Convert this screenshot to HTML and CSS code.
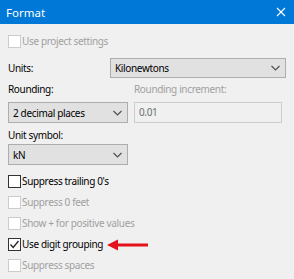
FILE: index.html
```html
<!doctype html>
<html lang="en-US">
    <head>
        <meta charset="utf-8">
        <meta name="viewport" content="width=device-width, initial-scale=1">
        <title>Format</title>
        <link rel="stylesheet" href="styles.css">
    </head>
    <body>
        <div class="dialog">
            <div class="titlebar">
                <span class="title">Format</span>
                <svg class="close" width="10" height="10" viewBox="0 0 10 10">
                    <path d="M1 1 L9 9 M9 1 L1 9" stroke="#fff" stroke-width="1.1" fill="none" />
                </svg>
            </div>
            <div class="content">
                <div class="check disabled first"><span class="box"></span>Use project settings</div>

                <div class="units">
                    <span class="label">Units:</span>
                    <div class="select wide">
                        <span>Kilonewtons</span>
                        <svg width="9" height="6" viewBox="0 0 9 6"><path d="M0.5 1 L4.5 5 L8.5 1" stroke="#505050" stroke-width="1.2" fill="none" /></svg>
                    </div>
                </div>

                <div class="pair">
                    <div class="field">
                        <span class="label">Rounding:</span>
                        <div class="select">
                            <span>2 decimal places</span>
                            <svg width="9" height="6" viewBox="0 0 9 6"><path d="M0.5 1 L4.5 5 L8.5 1" stroke="#505050" stroke-width="1.2" fill="none" /></svg>
                        </div>
                    </div>
                    <div class="field grow">
                        <span class="label disabled">Rounding increment:</span>
                        <div class="textbox">0.01</div>
                    </div>
                </div>

                <div class="field symbol">
                    <span class="label">Unit symbol:</span>
                    <div class="select">
                        <span>kN</span>
                        <svg width="9" height="6" viewBox="0 0 9 6"><path d="M0.5 1 L4.5 5 L8.5 1" stroke="#505050" stroke-width="1.2" fill="none" /></svg>
                    </div>
                </div>

                <div class="checks">
                    <div class="check"><span class="box"></span>Suppress trailing 0's</div>
                    <div class="check disabled"><span class="box"></span>Suppress 0 feet</div>
                    <div class="check disabled"><span class="box"></span>Show + for positive values</div>
                    <div class="check">
                        <span class="box checked">
                            <svg width="11" height="11" viewBox="0 0 11 11"><path d="M1.5 5.5 L4.2 8.5 L9.5 2" stroke="#222" stroke-width="1.3" fill="none" /></svg>
                        </span>Use digit grouping
                        <svg class="arrow" width="41" height="12" viewBox="0 0 41 12">
                            <path d="M0 6 L11 0.5 L11 11.5 Z" fill="#e3131b" />
                            <path d="M10 6 L41 6" stroke="#e3131b" stroke-width="3" />
                        </svg>
                    </div>
                    <div class="check disabled"><span class="box"></span>Suppress spaces</div>
                </div>
            </div>
        </div>
    </body>
</html>
```

FILE: styles.css
```css
* {
    margin: 0;
    padding: 0;
    box-sizing: border-box;
}

body {
    background: #f0f0f0;
    color: #000;
    font-family: 'Noto Sans', 'Open Sans', sans-serif;
    font-size: 10px;
}

.dialog {
    width: 294px;
    height: 279px;
    background: #f0f0f0;
}

.titlebar {
    height: 24px;
    background: #0078d7;
    color: #fff;
    display: flex;
    align-items: center;
    justify-content: space-between;
    padding: 0 8px 0 6px;
}

.title {
    font-size: 11.5px;
}

.content {
    padding: 0 8px;
    letter-spacing: -0.35px;
}

.check {
    display: flex;
    align-items: center;
    height: 13px;
    line-height: 13px;
    white-space: nowrap;
}

.check .box {
    width: 13px;
    height: 13px;
    border: 1px solid #333;
    background: #fff;
    margin-right: 1px;
    display: flex;
    align-items: center;
    justify-content: center;
}

.check.disabled {
    color: #a0a0a0;
}

.check.disabled .box {
    border-color: #cccccc;
}

.check.first {
    margin-top: 11px;
}

.label {
    display: block;
    line-height: 14px;
}

.label.disabled {
    color: #a0a0a0;
}

.units {
    display: flex;
    align-items: center;
    justify-content: space-between;
    margin-top: 10px;
}

.select {
    height: 21px;
    width: 120px;
    background: #e1e1e1;
    border: 1px solid #adadad;
    display: flex;
    align-items: center;
    justify-content: space-between;
    padding: 0 5px 0 4px;
}

.select.wide {
    width: 176px;
    height: 20px;
}

.pair {
    display: flex;
    gap: 6px;
    margin-top: 4px;
}

.field .label {
    margin-bottom: 6px;
}

.grow {
    flex: 1;
}

.textbox {
    height: 21px;
    border: 1px solid #cccccc;
    background: #f0f0f0;
    color: #6d6d6d;
    padding: 0 4px;
    line-height: 19px;
    margin-right: 4px;
}

.symbol {
    margin-top: 5px;
}

.symbol .label {
    margin-bottom: 2px;
}

.checks {
    display: flex;
    flex-direction: column;
    margin-top: 10px;
    gap: 8px;
}

.arrow {
    margin-left: 4px;
}
```
